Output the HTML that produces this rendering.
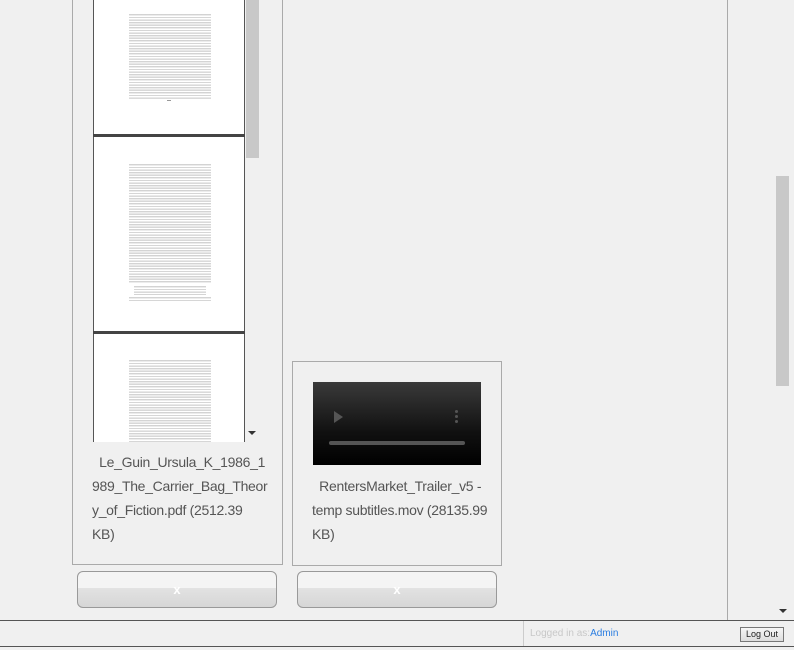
<!DOCTYPE html>
<html><head><style>
body{margin:0;width:794px;height:650px;background:#f0f0f0;position:relative;overflow:hidden;font-family:"Liberation Sans",Arial,sans-serif}
.a{position:absolute}
.page{position:absolute;left:93px;width:150px;background:#fff;border-left:1px solid #555;border-right:1px solid #555}
.txt{position:absolute;left:35px;width:82px;background:repeating-linear-gradient(#fff 0,#fff 1.2px,#d0d0d0 1.2px,#dcdcdc 2.6px,#fff 2.6px)}
.cap{font-size:14px;color:#555;line-height:24px;letter-spacing:-0.3px;white-space:nowrap}
.btn{position:absolute;height:35px;width:198px;border:1px solid #999;border-radius:6px;background:linear-gradient(#f4f4f4 0,#f4f4f4 45%,#e2e2e2 46%,#d6d6d6 100%);color:#fff;text-align:center;line-height:36px;font-size:13px;font-weight:bold}
</style></head><body>
<div class="a" style="left:72px;top:0;width:209px;height:564px;border:1px solid #aaa;border-top:none"></div>
<div class="a" style="left:727px;top:0;width:1px;height:620px;background:#aaa"></div>
<div class="page" style="top:0;height:134px"><div class="txt" style="top:13px;height:86px"></div><div class="a" style="left:73px;top:100px;width:4px;height:1px;background:#999"></div></div>
<div class="a" style="left:93px;top:134px;width:152px;height:3px;background:#444"></div>
<div class="page" style="top:137px;height:194px"><div class="txt" style="top:26px;height:120px"></div><div class="txt" style="top:148px;height:10px;left:40px;width:72px"></div><div class="txt" style="top:159px;height:6px"></div></div>
<div class="a" style="left:93px;top:331px;width:152px;height:3px;background:#444"></div>
<div class="page" style="top:334px;height:108px"><div class="txt" style="top:25px;height:83px"></div></div>
<div class="a" style="left:246px;top:0;width:13px;height:158px;background:#c8c8c8"></div>
<div class="a" style="left:248px;top:431px;width:0;height:0;border-left:4px solid transparent;border-right:4px solid transparent;border-top:4px solid #333"></div>
<div class="a cap" style="left:92px;top:450px">&nbsp;&nbsp;Le_Guin_Ursula_K_1986_1<br>989_The_Carrier_Bag_Theor<br>y_of_Fiction.pdf (2512.39<br>KB)</div>
<div class="a" style="left:292px;top:361px;width:208px;height:203px;border:1px solid #aaa"></div>
<div class="a" style="left:313px;top:382px;width:168px;height:83px;background:linear-gradient(#3a3a3a,#111 60%,#000)"></div>
<div class="a" style="left:334px;top:411px;width:0;height:0;border-top:6px solid transparent;border-bottom:6px solid transparent;border-left:9px solid #555"></div>
<div class="a" style="left:455px;top:410px;width:3px;height:3px;background:#555;box-shadow:0 5px #555,0 10px #555;border-radius:2px"></div>
<div class="a" style="left:329px;top:441px;width:136px;height:4px;background:#555;border-radius:2px"></div>
<div class="a cap" style="left:312px;top:474px">&nbsp;&nbsp;RentersMarket_Trailer_v5 -<br>temp subtitles.mov (28135.99<br>KB)</div>
<div class="btn" style="left:77px;top:571px">x</div>
<div class="btn" style="left:297px;top:571px">x</div>
<div class="a" style="left:776px;top:176px;width:13px;height:210px;background:#c8c8c8"></div>
<div class="a" style="left:779px;top:609px;width:0;height:0;border-left:4px solid transparent;border-right:4px solid transparent;border-top:4px solid #333"></div>
<div class="a" style="left:0;top:620px;width:794px;height:1px;background:#555"></div>
<div class="a" style="left:0;top:646px;width:794px;height:1px;background:#555"></div>
<div class="a" style="left:523px;top:621px;width:1px;height:25px;background:#ccc"></div>
<div class="a" style="left:530px;top:628px;font-size:10px;color:#c8c8c8">Logged in as:<span style="color:#2a7de1">Admin</span></div>
<div class="a" style="left:740px;top:627px;width:42px;height:13px;border:1px solid #777;background:linear-gradient(#f6f6f6,#ddd);font-size:9px;text-align:center;line-height:13px;color:#222">Log Out</div>
</body></html>
